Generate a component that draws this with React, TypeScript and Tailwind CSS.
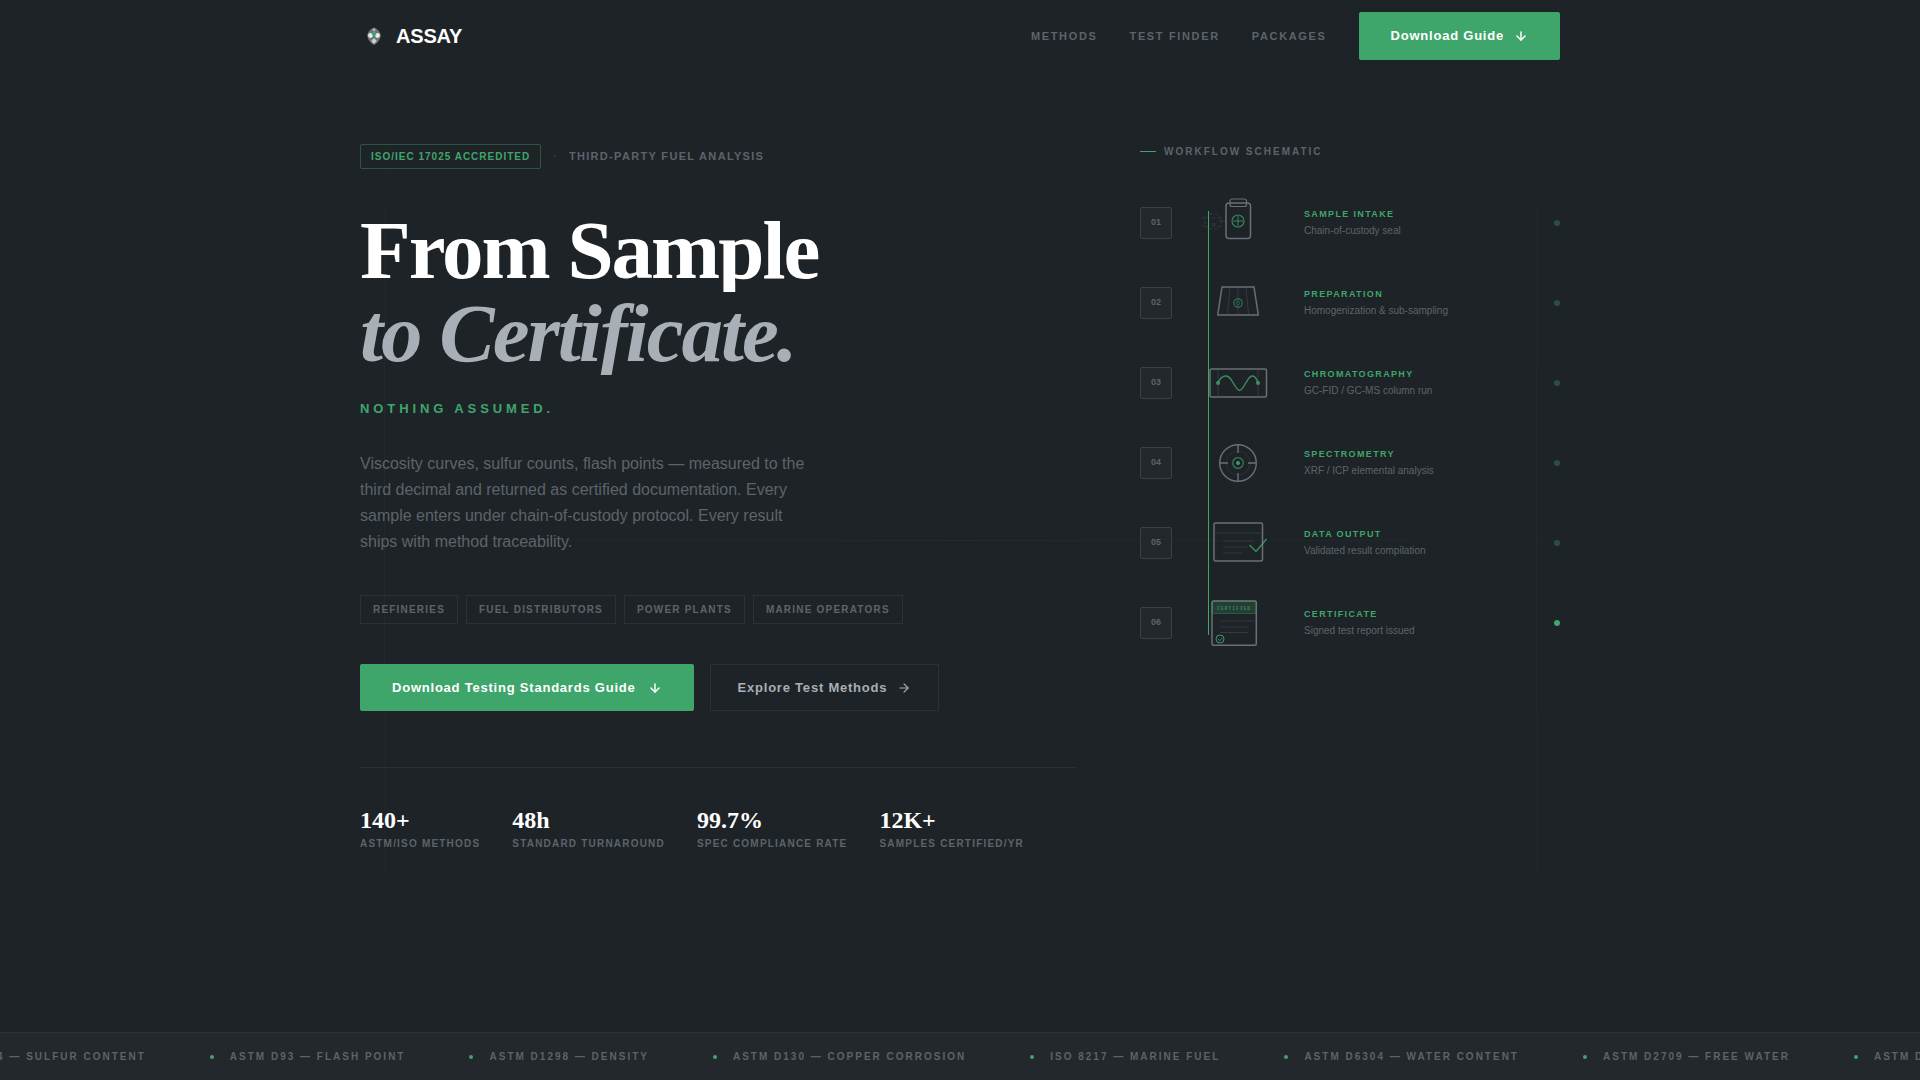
import React from "react";
import { ArrowDown, ArrowRight } from "lucide-react";

const links = ["Methods", "Test Finder", "Packages"];
const sectors = ["Refineries", "Fuel Distributors", "Power Plants", "Marine Operators"];
const stats = [
  ["140+", "ASTM/ISO Methods"],
  ["48h", "Standard Turnaround"],
  ["99.7%", "Spec Compliance Rate"],
  ["12K+", "Samples Certified/yr"],
];
const standards = [
  "ASTM D4294 — Sulfur Content",
  "ASTM D93 — Flash Point",
  "ASTM D1298 — Density",
  "ASTM D130 — Copper Corrosion",
  "ISO 8217 — Marine Fuel",
  "ASTM D6304 — Water Content",
  "ASTM D2709 — Free Water",
  "ASTM D445 — Viscosity",
];

const GREEN = "#3fa66b";
const GREY = "#6b7076";
const FAINT = "#33393d";

function Drawing({ children }: { children: React.ReactNode }) {
  return (
    <svg viewBox="0 0 64 48" className="h-12 w-16 overflow-visible" fill="none" aria-hidden="true">
      {children}
    </svg>
  );
}

const Bottle = () => (
  <Drawing>
    <g stroke={FAINT} strokeWidth="1" strokeDasharray="3 2">
      <rect x="-1" y="15" width="16" height="15" rx="5" />
      <path d="M-4 19h20M-4 27h20" />
    </g>
    <path d="M5 25h5M13 22h7" stroke={FAINT} />
    <rect x="20" y="4" width="24.5" height="35.5" rx="3" stroke={GREY} strokeWidth="1.5" />
    <rect x="24" y="0" width="16.5" height="7.5" rx="2" stroke={GREY} strokeWidth="1.2" />
    <g stroke={GREEN} opacity="0.75">
      <circle cx="32" cy="22" r="6" strokeWidth="1.2" />
      <path d="M32 17v10M27 22h10" />
    </g>
  </Drawing>
);

const Funnel = () => (
  <Drawing>
    <path d="M16 8h32l4.3 28H11.7z" stroke={GREY} strokeWidth="1.5" strokeLinejoin="round" />
    <path d="M24 9l-2.5 26M32 9v26M40 9l2.5 26" stroke={FAINT} />
    <circle cx="32" cy="24" r="4.2" stroke={GREEN} strokeWidth="1.2" opacity="0.6" />
    <circle cx="32" cy="24" r="1.8" stroke={GREEN} strokeWidth="0.8" opacity="0.5" />
  </Drawing>
);

const Column = () => (
  <Drawing>
    <rect x="4" y="10" width="56.5" height="28" rx="1.5" stroke={GREY} strokeWidth="1.5" />
    <path d="M12 11v26M52 11v26" stroke={FAINT} />
    <path
      d="M12 24C16 15 22 15 26 22S32 31.5 33.500 31.5S37 29 41 22S49 15 52 24"
      stroke={GREEN}
      strokeWidth="1.5"
      opacity="0.8"
    />
    <circle cx="12" cy="24" r="2" fill={GREEN} opacity="0.8" />
    <circle cx="52" cy="24" r="2" fill={GREEN} opacity="0.8" />
  </Drawing>
);

const Target = () => (
  <Drawing>
    <circle cx="32" cy="24" r="18.3" stroke={GREY} strokeWidth="1.4" />
    <circle cx="32" cy="24" r="12" stroke={FAINT} strokeWidth="0.6" />
    <path d="M32 6v8M32 34v8M14 24h8M42 24h8" stroke={GREY} strokeWidth="1.4" />
    <circle cx="32" cy="24" r="5.3" stroke={GREEN} strokeWidth="1.2" opacity="0.7" />
    <circle cx="32" cy="24" r="2" fill={GREEN} opacity="0.9" />
  </Drawing>
);

const Report = () => (
  <Drawing>
    <rect x="8" y="4" width="48.5" height="38" rx="1.5" stroke={GREY} strokeWidth="1.5" />
    <path d="M9 14h47M17 22h31M17 28h25M17 34h19" stroke={FAINT} />
    <path d="M43.5 26l6.5 6.5L60.5 20" stroke={GREEN} strokeWidth="1.5" opacity="0.8" />
  </Drawing>
);

const Certificate = () => (
  <Drawing>
    <rect x="6" y="2" width="44.3" height="44.3" rx="1.5" stroke={GREY} strokeWidth="1.5" />
    <rect x="6" y="2" width="44.3" height="12.5" rx="1.5" fill={GREEN} fillOpacity="0.2" stroke={GREEN} strokeOpacity="0.35" />
    <text x="28" y="11" textAnchor="middle" fontSize="5" fontWeight="700" letterSpacing="0.8" fill={GREEN} fillOpacity="0.7" fontFamily="Liberation Mono, monospace">
      CERTIFIED
    </text>
    <path d="M14 22h34M14 28h29M14 33.5h28" stroke={FAINT} />
    <circle cx="14" cy="40" r="4" stroke={GREEN} strokeWidth="1" opacity="0.9" />
    <path d="M12 40l1.7 1.7L16.3 39" stroke={GREEN} strokeWidth="0.9" />
  </Drawing>
);

const steps = [
  { title: "Sample Intake", note: "Chain-of-custody seal", Icon: Bottle },
  { title: "Preparation", note: "Homogenization & sub-sampling", Icon: Funnel },
  { title: "Chromatography", note: "GC-FID / GC-MS column run", Icon: Column },
  { title: "Spectrometry", note: "XRF / ICP elemental analysis", Icon: Target },
  { title: "Data Output", note: "Validated result compilation", Icon: Report },
  { title: "Certificate", note: "Signed test report issued", Icon: Certificate },
];

function Logo() {
  return (
    <svg viewBox="0 0 28 28" className="size-7" aria-hidden="true">
      <path d="M14 5.5C17 6.500 20.500 10 20.800 13.500C20.500 17 17.500 21.500 14 22.800C10.500 21.500 7.500 17 7.200 13.500C7.500 10 11 6.500 14 5.500Z" fill="#6d7377" />
      <circle cx="10.5" cy="13.5" r="2.4" fill="#e8eaeb" />
      <circle cx="17.5" cy="13.5" r="2.4" fill="#e8eaeb" />
      <path d="M14 16l2.8 3-2.8 3-2.8-3z" fill="#c9cdd0" />
      <circle cx="14" cy="7.8" r="1.4" fill="#b4b9bd" />
      <circle cx="14" cy="11.5" r="2.2" fill="#3fa66b" />
    </svg>
  );
}

export default function App() {
  return (
    <div className="relative isolate flex min-h-screen flex-col overflow-hidden bg-[#1e2327] font-['Liberation_Sans',Arial,sans-serif] text-[#5d636b]">
      <div aria-hidden="true" className="pointer-events-none absolute inset-0 -z-10">
        <div className="absolute inset-y-0 left-1/5 w-px bg-linear-to-b from-transparent via-white/3 to-transparent" />
        <div className="absolute inset-y-0 left-4/5 w-px bg-linear-to-b from-transparent via-white/3 to-transparent" />
        <div className="absolute inset-x-0 top-1/2 h-px bg-linear-to-r from-transparent via-white/3 to-transparent" />
      </div>

      <header className="mx-auto flex h-18 w-full max-w-[1200px] items-center justify-between">
        <a href="#" className="flex items-center gap-2 text-xl font-bold tracking-[-0.01em] text-white">
          <Logo />
          ASSAY
        </a>
        <nav className="flex items-center gap-8 text-[11px] font-bold tracking-[0.15em] uppercase">
          {links.map((l) => (
            <a key={l} href="#">
              {l}
            </a>
          ))}
          <button className="flex h-12 items-center gap-2.5 rounded-xs bg-[#3fa66b] px-8 text-[13px] tracking-[0.06em] text-white normal-case">
            Download Guide
            <ArrowDown size={14} strokeWidth={2.5} />
          </button>
        </nav>
      </header>

      <main className="mx-auto grid w-full max-w-[1200px] grid-cols-[1fr_420px] items-start gap-16 py-18">
        <section>
          <div className="flex items-center gap-3 font-bold uppercase">
            <span className="rounded-xs border border-[#3fa66b]/40 px-2.5 py-1 text-[10px] leading-[15px] tracking-widest text-[#3fa66b]">
              ISO/IEC 17025 Accredited
            </span>
            <span className="text-[11px] leading-[15px] text-[#3a4045]">·</span>
            <span className="text-[11px] leading-[15px] tracking-[0.12em]">Third-Party Fuel Analysis</span>
          </div>

          <h1 className="mt-10 font-['Liberation_Serif',serif] text-[83px] leading-[83px] font-bold tracking-[-2px]">
            <span className="block overflow-hidden text-white">From Sample</span>
            <span className="block overflow-hidden text-[#a8afb6] italic">to Certificate.</span>
          </h1>
          <p className="mt-6 text-[13px] leading-5 font-bold tracking-[0.3em] text-[#3fa66b] uppercase">Nothing Assumed.</p>
          <p className="mt-8 max-w-[460px] text-base leading-[26px]">
            Viscosity curves, sulfur counts, flash points — measured to the third decimal and returned as certified
            documentation. Every sample enters under chain-of-custody protocol. Every result ships with method
            traceability.
          </p>

          <ul className="mt-10 flex gap-2">
            {sectors.map((s) => (
              <li key={s} className="border border-[#2b3135] px-3 py-1.5 text-[10px] leading-[15px] font-bold tracking-[0.12em] uppercase">
                {s}
              </li>
            ))}
          </ul>

          <div className="mt-10 flex gap-4 text-[13px] font-bold tracking-[0.06em]">
            <button className="flex h-[47px] items-center gap-3 rounded-xs bg-[#3fa66b] px-8 text-white">
              Download Testing Standards Guide
              <ArrowDown size={14} strokeWidth={2.5} />
            </button>
            <button className="flex h-[47px] items-center gap-2.5 border border-[#2b3135] px-[27px] text-[#a8afb6]">
              Explore Test Methods
              <ArrowRight size={14} strokeWidth={2} />
            </button>
          </div>

          <dl className="mt-14 flex gap-8 border-t border-[#2b3135] pt-10">
            {stats.map(([value, label]) => (
              <div key={label} className="flex flex-col-reverse gap-1">
                <dt className="text-[10px] leading-4 font-bold tracking-[0.12em] uppercase">{label}</dt>
                <dd className="font-['Liberation_Serif',serif] text-2xl leading-6 font-bold text-white">{value}</dd>
              </div>
            ))}
          </dl>
        </section>

        <section>
          <h2 className="flex items-center gap-2 text-[10px] leading-[15px] font-bold tracking-[0.2em] uppercase">
            <span className="h-px w-4 bg-[#3fa66b]" />
            Workflow Schematic
          </h2>
          <ol className="relative mt-10 flex flex-col gap-8">
            <li aria-hidden="true" className="absolute top-3 bottom-3 left-17 w-px bg-[#3fa66b]" />
            {steps.map(({ title, note, Icon }, i) => (
              <li key={title} className="grid grid-cols-[32px_100px_1fr_auto] items-center gap-4">
                <span className="flex size-8 items-center justify-center rounded-xs border border-[#3a4045] bg-[#22282b] text-[9px] font-bold">
                  0{i + 1}
                </span>
                <span className="flex justify-center">
                  <Icon />
                </span>
                <div className="flex flex-col gap-0.5">
                  <h3 className="text-[9px] leading-[14px] font-bold tracking-[0.15em] text-[#3fa66b] uppercase">{title}</h3>
                  <p className="text-[10px] leading-4">{note}</p>
                </div>
                <span className={i === 5 ? "size-1.5 rounded-full bg-[#3fa66b]" : "size-1.5 rounded-full bg-[#3fa66b]/35"} />
              </li>
            ))}
          </ol>
        </section>
      </main>

      <footer className="mt-auto border-t border-[#2b3135] bg-[#22282b]">
        <ul className="-ml-24 flex h-[47px] items-center gap-16 text-[10px] font-bold tracking-[0.2em] whitespace-nowrap uppercase">
          {standards.map((s) => (
            <li key={s} className="flex shrink-0 items-center gap-4">
              <span className="size-1 rounded-full bg-[#3fa66b]" />
              {s}
            </li>
          ))}
        </ul>
      </footer>
    </div>
  );
}
